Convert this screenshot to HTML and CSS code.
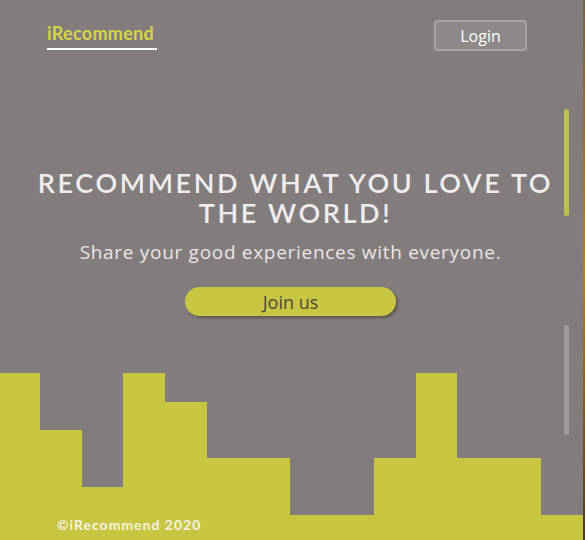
FILE: index.html
```html
<!DOCTYPE html>
<html lang="en">
<head>
<meta charset="utf-8">
<title>iRecommend</title>
<link rel="stylesheet" href="styles.css">
</head>
<body>
<div class="page">
  <header class="topbar">
    <a class="logo" href="#">iRecommend</a>
    <button class="login">Login</button>
  </header>
  <main class="hero">
    <h1 class="title">RECOMMEND WHAT YOU LOVE TO<br>THE WORLD!</h1>
    <p class="subtitle">Share your good experiences with everyone.</p>
    <button class="join">Join us</button>
  </main>
  <section class="city">
    <svg class="skyline" width="583" height="167" viewBox="0 373 583 167" preserveAspectRatio="none">
      <path fill="#c8c641" d="M0 373 H40 V430 H82 V487 H123 V373 H165 V402 H207 V458 H290 V515 H374 V458 H416 V373 H457 V458 H541 V515 H583 V540 H0 Z"/>
    </svg>
    <footer class="copy">©iRecommend 2020</footer>
  </section>
  <span class="track track-top"></span>
  <span class="track track-bottom"></span>
  <span class="edge"></span>
</div>
</body>
</html>
```

FILE: styles.css
```css
html, body {
  margin: 0;
  padding: 0;
}
body {
  background: #827c7c;
  width: 585px;
  height: 540px;
  overflow: hidden;
}
.page {
  position: relative;
  width: 585px;
  height: 540px;
  display: flex;
  flex-direction: column;
}
.topbar {
  display: flex;
  justify-content: space-between;
  align-items: flex-start;
  padding: 20px 58px 0 47px;
  height: 32px;
}
.logo {
  font-family: "Lato", sans-serif;
  font-weight: 700;
  font-size: 18px;
  letter-spacing: 0.3px;
  color: #d6d445;
  text-decoration: none;
  border-bottom: 2px solid #ffffff;
  padding: 3px 0 5px;
  line-height: 20px;
  width: 110px;
}
.login {
  width: 93px;
  height: 31px;
  background: #8e8888;
  border: 2px solid #a9a4a4;
  border-radius: 4px;
  color: #ffffff;
  font-family: "Open Sans", sans-serif;
  font-size: 16px;
  padding: 0;
}
.hero {
  display: flex;
  flex-direction: column;
  align-items: center;
  padding-top: 116px;
  padding-right: 4px;
}
.title {
  margin: 0;
  font-family: "Lato", sans-serif;
  font-weight: 600;
  font-size: 27px;
  line-height: 30px;
  letter-spacing: 2.6px;
  color: #f0ecec;
  text-align: center;
  padding-left: 10px;
}
.subtitle {
  margin: 11px 0 0;
  font-family: "Open Sans", sans-serif;
  font-size: 19px;
  line-height: 26px;
  letter-spacing: 0.7px;
  color: #ece4e4;
}
.join {
  margin-top: 22px;
  width: 211px;
  height: 29px;
  border: none;
  border-radius: 15px;
  background: #c8c641;
  color: #4a4838;
  font-family: "Open Sans", sans-serif;
  font-size: 18px;
  padding: 0;
  box-shadow: 2px 2px 3px rgba(60, 55, 40, 0.55);
}
.city {
  position: relative;
  margin-top: auto;
  height: 167px;
}
.skyline {
  display: block;
}
.copy {
  position: absolute;
  left: 57px;
  top: 143px;
  font-family: "Lato", sans-serif;
  font-weight: 700;
  font-size: 14px;
  letter-spacing: 1px;
  color: #f4f2e6;
}
.track {
  position: absolute;
  left: 564px;
  width: 5px;
  border-radius: 3px;
}
.track-top {
  top: 109px;
  height: 107px;
  background: #c0bf4c;
}
.track-bottom {
  top: 325px;
  height: 110px;
  background: #a19b9b;
}
.edge {
  position: absolute;
  right: 0;
  top: 0;
  width: 2px;
  height: 540px;
  background: linear-gradient(#6f6050, #b08030 50%, #4a3a2a);
}
```
